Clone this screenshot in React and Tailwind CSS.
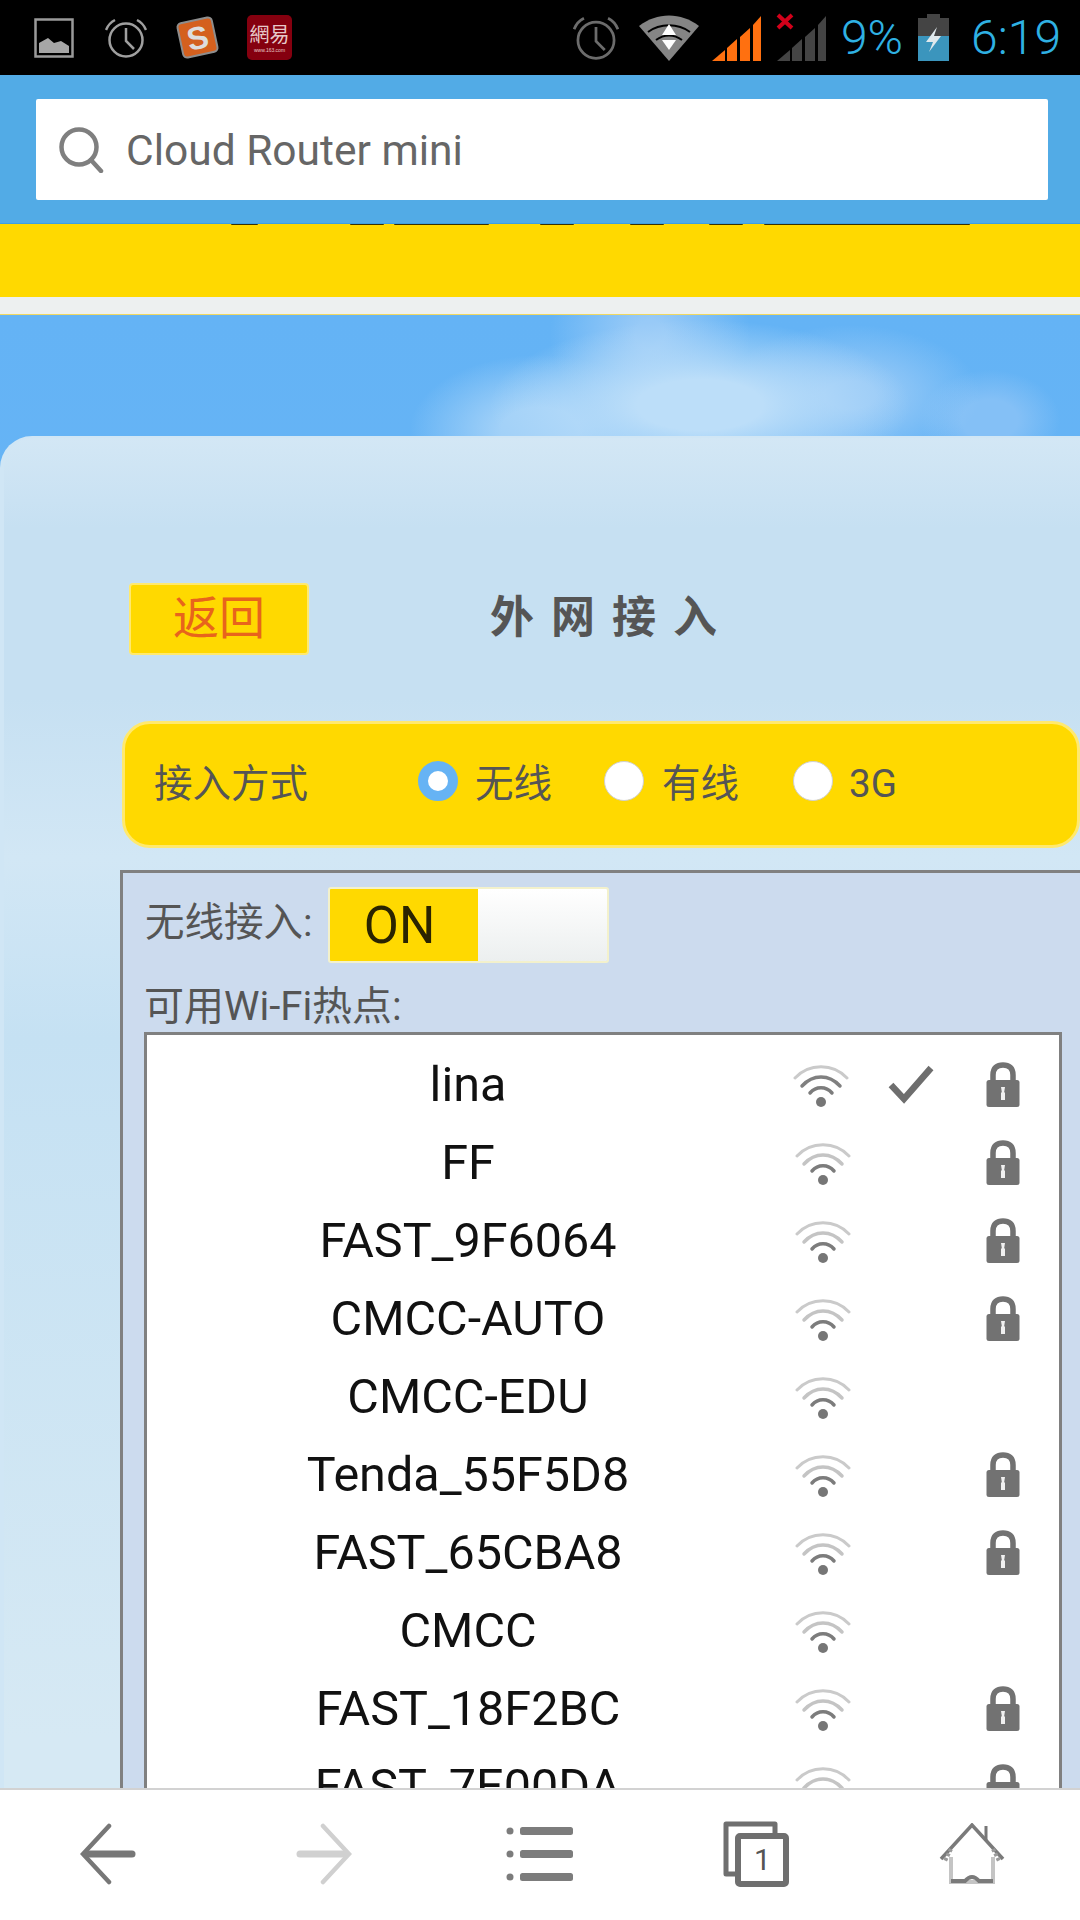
const networks = [
  { name: "lina", level: 2, lock: true, check: true },
  { name: "FF", level: 1, lock: true },
  { name: "FAST_9F6064", level: 1, lock: true },
  { name: "CMCC-AUTO", level: 1, lock: true },
  { name: "CMCC-EDU", level: 1 },
  { name: "Tenda_55F5D8", level: 1, lock: true },
  { name: "FAST_65CBA8", level: 1, lock: true },
  { name: "CMCC", level: 1 },
  { name: "FAST_18F2BC", level: 1, lock: true },
  { name: "FAST_7E00DA", level: 1, lock: true },
];

function WifiIcon({ level }) {
  const mid = level >= 2 ? "#808080" : "#c4c4c4";
  return (
    <svg className="blur-[0.6px]" width="56" height="46" viewBox="0 0 56 46" fill="none" strokeLinecap="round">
      <path d="M2 16C16 1 40 1 54 16" stroke="#cacaca" strokeWidth="3" />
      <path d="M9 24C20 12 36 12 47 24" stroke={mid} strokeWidth="3.5" />
      <path d="M17 31C23 24 33 24 39 31" stroke="#7c7c7c" strokeWidth="3.5" />
      <circle cx="28" cy="40" r="5" fill="#767676" />
    </svg>
  );
}

function LockIcon() {
  return (
    <svg className="blur-[0.5px]" width="34" height="46" viewBox="0 0 34 46">
      <path d="M7 20V13C7 6 11 3 17 3S27 6 27 13V20" fill="none" stroke="#727272" strokeWidth="5.5" />
      <rect x="0.5" y="18" width="33" height="27" rx="2.5" fill="#727272" />
      <path d="M15 25h4l-.8 5 .8 1v7h-4v-7l.8-1z" fill="#f0f0f0" />
    </svg>
  );
}

function CheckIcon() {
  return (
    <svg className="blur-[0.5px]" width="46" height="40" viewBox="0 0 46 40" fill="none">
      <path d="M3 20L16 34L43 3" stroke="#6e6e6e" strokeWidth="6.5" />
    </svg>
  );
}

function AlarmIcon({ color, size = 42 }) {
  return (
    <svg width={size} height={size} viewBox="0 0 42 42" fill="none" stroke={color}>
      <circle cx="21" cy="23" r="16.5" strokeWidth="2.5" />
      <path d="M21 11V24L29 32" strokeWidth="2.5" />
      <path d="M1 13C3 8 6 5 10 3" strokeWidth="2.5" />
      <path d="M41 13C39 8 36 5 32 3" strokeWidth="2.5" />
    </svg>
  );
}

function SignalBars({ color }) {
  return (
    <svg width="50" height="47" viewBox="0 0 50 47" fill={color}>
      <path d="M0 47L13 36V47Z" />
      <path d="M15 34L25 25V47H15Z" />
      <path d="M28 23L38 14V47H28Z" />
      <path d="M41 11L49 2V47H41Z" />
    </svg>
  );
}

function StatusBar() {
  return (
    <div className="h-[75px] bg-black flex items-center pl-[34px] pr-[19px] shrink-0">
      <svg width="40" height="40" viewBox="0 0 40 40">
        <rect x="1.5" y="1.5" width="37" height="37" fill="none" stroke="#9a9a9a" strokeWidth="2.5" />
        <path d="M5 35V25L14 20L20 25L27 23L35 28V35Z" fill="#a6a6a6" />
      </svg>
      <div className="ml-[31px]">
        <AlarmIcon color="#9f9f9f" />
      </div>
      <div className="ml-[32px] w-[37px] h-[37px] flex items-center justify-center rounded-[5px] bg-[#d4601e] border-2 border-[#8d8d8d] -rotate-12 text-[#dddddd] text-[32px] font-black font-['Liberation_Sans',sans-serif] leading-none">
        S
      </div>
      <div className="ml-[31px] w-[45px] h-[45px] flex flex-col items-center justify-center rounded-[5px] bg-[#85000f] text-[#e7c9c9] font-['Noto_Sans_CJK_TC',sans-serif] leading-none overflow-hidden">
        <span className="text-[20px] leading-[24px] whitespace-nowrap">網易</span>
        <span className="text-[5px] leading-[8px] font-['Liberation_Sans',sans-serif] whitespace-nowrap">www.163.com</span>
      </div>

      <div className="ml-auto flex items-center">
        <AlarmIcon color="#6c6c6c" size={46} />
        <div className="ml-[20px]">
          <svg width="60" height="46" viewBox="0 0 60 46">
            <path d="M0 11C18 -3 42 -3 60 11L30 46Z" fill="#858585" />
            <path d="M9 17C21 8 39 8 51 17" stroke="#000" strokeWidth="2" fill="none" />
            <path d="M17 25C25 19 35 19 43 25" stroke="#000" strokeWidth="2" fill="none" />
            <path d="M30 9L37 20H23Z" fill="#fff" />
            <path d="M23 25H37L30 35Z" fill="#fff" />
          </svg>
        </div>
        <div className="ml-[13px]">
          <SignalBars color="#ff7010" />
        </div>
        <div className="ml-[15px] relative">
          <SignalBars color="#444444" />
          <svg className="absolute -left-px -top-px" width="18" height="17" viewBox="0 0 18 17" stroke="#d2001a" strokeWidth="4">
            <path d="M2 2L16 15M16 2L2 15" />
          </svg>
        </div>
        <span className="ml-[14px] text-[#2fb1e3] text-[48px] leading-none font-light font-['Roboto',sans-serif]">9%</span>
        <div className="ml-[15px] w-[31px] h-[47px] relative">
          <svg width="31" height="47" viewBox="0 0 31 47">
            <rect x="9" y="0" width="13" height="5" fill="#444" />
            <rect x="0" y="4" width="31" height="43" fill="#444" />
            <rect x="0" y="22" width="31" height="25" fill="#3b95bd" />
            <path d="M19 13L8 28H15L11 38L23 22H16Z" fill="#dfe8ec" />
          </svg>
        </div>
        <span className="ml-[22px] text-[#2fb1e3] text-[48px] leading-none font-light font-['Roboto',sans-serif]">6:19</span>
      </div>
    </div>
  );
}

function Radio({ checked }) {
  if (checked) {
    return <span className="-mt-[8px] w-[40px] h-[40px] rounded-full bg-white border-[10px] border-[#66b3f4] shrink-0" />;
  }
  return <span className="-mt-[8px] w-[40px] h-[40px] rounded-full bg-white border border-[#cfcfcf] shrink-0" />;
}

function NetworkRow({ network, first }) {
  return (
    <div className="h-[78px] grid grid-cols-[642px_68px_108px_76px] items-center">
      <div className="text-center text-[48.5px] leading-none text-[#111111] whitespace-nowrap">{network.name}</div>
      <div className={first ? "flex justify-center -translate-x-[2px]" : "flex justify-center"}>
        <WifiIcon level={network.level} />
      </div>
      <div className="flex justify-center">{network.check && <CheckIcon />}</div>
      <div className="flex justify-center">{network.lock && <LockIcon />}</div>
    </div>
  );
}

function BottomBar() {
  return (
    <div className="h-[132px] bg-white border-t-2 border-[#d2d2d2] shrink-0 grid grid-cols-5 items-center justify-items-center pb-[2px]">
      <svg width="56" height="62" viewBox="0 0 56 62" fill="none" stroke="#777777" strokeLinecap="round">
        <path d="M29 3L3 31L29 59" strokeWidth="4.5" />
        <path d="M6 31H52" strokeWidth="7" />
      </svg>
      <svg width="56" height="62" viewBox="0 0 56 62" fill="none" stroke="#d0d0d0" strokeLinecap="round">
        <path d="M27 3L53 31L27 59" strokeWidth="4.5" />
        <path d="M4 31H50" strokeWidth="7" />
      </svg>
      <svg width="68" height="56" viewBox="0 0 68 56" fill="#7c7c7c">
        <circle cx="4" cy="5" r="3.5" />
        <rect x="14" y="1" width="53" height="8" rx="2.5" />
        <circle cx="4" cy="28" r="3.5" />
        <rect x="14" y="24" width="53" height="8" rx="2.5" />
        <circle cx="4" cy="51" r="3.5" />
        <rect x="14" y="47" width="53" height="8" rx="2.5" />
      </svg>
      <div className="relative w-[66px] h-[66px]">
        <svg width="66" height="66" viewBox="0 0 66 66" fill="none" stroke="#6f6f6f">
          <path d="M12 53H3V3H52V12" strokeWidth="5" strokeLinejoin="round" />
          <rect x="15" y="15" width="48" height="48" rx="2" strokeWidth="6" fill="#fff" />
        </svg>
        <span className="absolute inset-0 pl-[13px] pt-[12px] flex items-center justify-center text-[30px] leading-none text-[#555555] font-['Roboto',sans-serif]">1</span>
      </div>
      <svg width="66" height="62" viewBox="0 0 66 62" fill="none">
        <path d="M2 36L33 2L64 36" stroke="#7a7a7a" strokeWidth="3.5" />
        <path d="M47 3V18" stroke="#777777" strokeWidth="3" />
        <path d="M12 26L6 38M54 26L60 38" stroke="#9a9a9a" strokeWidth="4" strokeDasharray="3 2" />
        <path d="M12 34V59H54V34" stroke="#c4c4c4" strokeWidth="4" />
        <path d="M12 58H26Q33 50 40 58H54" stroke="#7a7a7a" strokeWidth="4" />
      </svg>
    </div>
  );
}

export default function App() {
  return (
    <div className="w-[1080px] h-[1920px] flex flex-col overflow-hidden bg-white font-['Roboto','Noto_Sans_CJK_SC',sans-serif]">
      <StatusBar />

      <div className="h-[149px] bg-[#52abe6] border-b border-[#3f9fe0] px-[36px] pt-[24px] shrink-0">
        <div className="h-[101px] w-[1012px] bg-white rounded-[2px] flex items-center pl-[22px]">
          <svg width="46" height="46" viewBox="0 0 46 46" fill="none" stroke="#7f7f7f">
            <circle cx="21" cy="20" r="17.5" strokeWidth="4.5" />
            <path d="M33 33L43 44" strokeWidth="4.5" strokeLinecap="round" />
          </svg>
          <span className="ml-[22px] mt-[4px] text-[42.5px] text-[#666666] leading-none">Cloud Router mini</span>
        </div>
      </div>

      {/* bottoms of a headline that scrolled under the address bar */}
      <div className="h-[73px] bg-[#ffd900] shrink-0 flex items-start pl-[231px]">
        <span className="h-px w-[27px] bg-[#3a3000] rounded-b-full" />
        <span className="h-px w-[34px] ml-[92px] bg-[#3a3000] rounded-b-full" />
        <span className="h-px w-[95px] ml-[10px] bg-[#3a3000] rounded-b-full" />
        <span className="h-px w-[34px] ml-[51px] bg-[#3a3000] rounded-b-full" />
        <span className="h-px w-[34px] ml-[56px] bg-[#3a3000] rounded-b-full" />
        <span className="h-px w-[34px] ml-[45px] bg-[#3a3000] rounded-b-full" />
        <span className="h-px w-[206px] ml-[21px] bg-[#3a3000] rounded-b-full" />
      </div>
      <div className="h-[18px] bg-[#edf0f0] border-b border-[#f0d860] shrink-0" />

      <div className="flex-1 min-h-0 overflow-hidden pt-[121px] bg-[radial-gradient(ellipse_210px_85px_at_700px_90px,#bcdef9_30%,transparent_100%),radial-gradient(ellipse_100px_95px_at_650px_20px,#98caf7_15%,transparent_100%),radial-gradient(ellipse_130px_75px_at_540px_115px,#a2d1f8_30%,transparent_100%),radial-gradient(ellipse_130px_70px_at_850px_80px,#98caf7_20%,transparent_100%),radial-gradient(ellipse_70px_50px_at_990px_105px,#84c0f6_40%,transparent_100%),linear-gradient(180deg,#64b3f5,#71b9f5)]">
        <div className="h-full overflow-hidden rounded-tl-[32px] pl-[116px] pt-[145px] border-l-[4px] border-t-2 border-[#d0e6f5] bg-[linear-gradient(180deg,#d3e7f5_0px,#c6e0f2_90px,#c6e0f2_260px,#d2e7f5_420px,#c5e1f3_600px,#d6e9f4_1300px)]">
          <div className="flex items-center ml-[9px]">
            <button className="w-[180px] h-[72px] pb-[3px] rounded-[4px] bg-[#ffd900] border-2 border-[#ffe96e] text-[46px] leading-none text-[#e8641c]">
              返回
            </button>
            <h1 className="ml-[181px] -mt-[10px] text-[44px] leading-none font-bold tracking-[17px] text-[#555555] font-['Noto_Sans_CJK_SC',sans-serif]">
              外网接入
            </h1>
          </div>

          <div className="mt-[66px] ml-[2px] w-[958px] h-[127px] rounded-[28px] bg-[#ffd900] border-[3px] border-[#ffe96e] flex items-center pl-[29px] text-[38.5px] leading-none text-[#555555]">
            <span>接入方式</span>
            <span className="ml-[110px] flex items-center"><Radio checked /></span>
            <span className="ml-[17px]">无线</span>
            <span className="ml-[52px] flex items-center"><Radio /></span>
            <span className="ml-[18px]">有线</span>
            <span className="ml-[54px] flex items-center"><Radio /></span>
            <span className="ml-[16px]">3G</span>
          </div>

          <div className="mt-[22px] w-[1000px] h-[1100px] border-[3px] border-[#808080] bg-[#ccdbee] pt-[14px] pl-[21px]">
            <div className="flex items-center pl-[1px]">
              <span className="-mt-[4px] text-[39.5px] leading-none text-[#555555] whitespace-nowrap">无线接入:</span>
              <div className="ml-[15px] flex w-[281px] h-[76px] rounded-[3px] border-2 border-[#f3f1cc] overflow-hidden">
                <div className="w-[148px] bg-[#ffd900] flex items-center justify-center pr-[8px] text-[51px] leading-none text-[#2a2400] blur-[0.4px]">ON</div>
                <div className="flex-1 bg-[linear-gradient(180deg,#ffffff,#ecefef)]" />
              </div>
            </div>
            <div className="mt-[23px] h-[42px] text-[40px] leading-[42px] text-[#555555] whitespace-nowrap">可用Wi-Fi热点:</div>
            <div className="mt-[4px] w-[918px] h-[1000px] border-[3px] border-[#808080] bg-white pt-[11px]">
              {networks.map((network, i) => (
                <NetworkRow key={network.name} network={network} first={i === 0} />
              ))}
            </div>
          </div>
        </div>
      </div>

      <BottomBar />
    </div>
  );
}
